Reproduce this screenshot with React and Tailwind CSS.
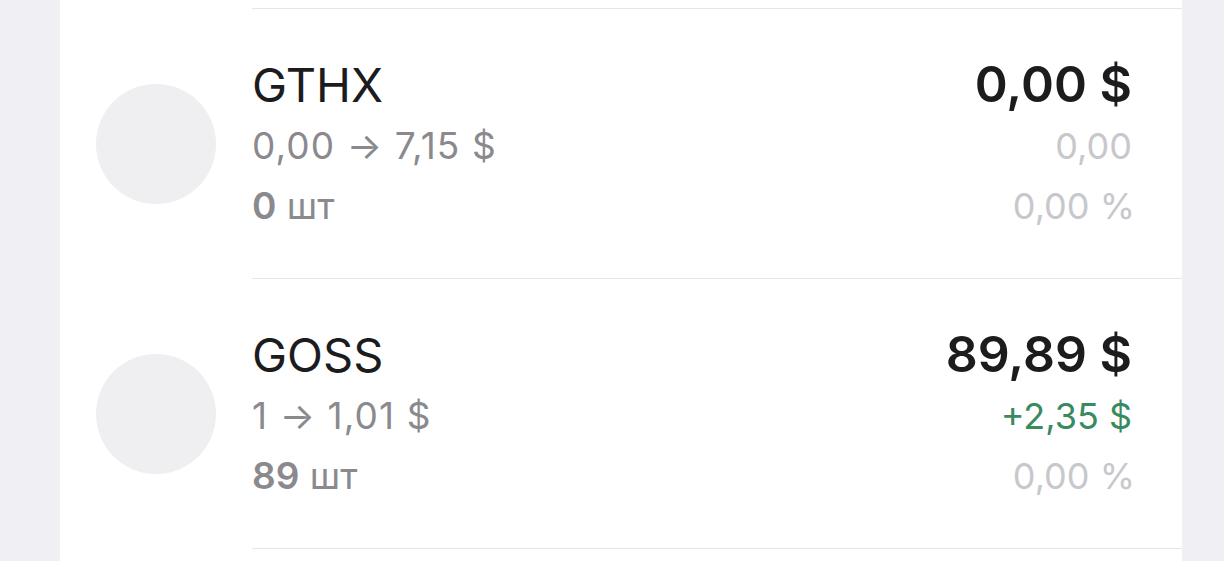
const positions = [
  {
    ticker: 'GTHX',
    prices: '0,00 → 7,15 $',
    qty: '0',
    value: '0,00 $',
    change: '0,00',
    changeColor: 'text-[#c7c7cc]',
    percent: '0,00 %',
  },
  {
    ticker: 'GOSS',
    prices: '1 → 1,01 $',
    qty: '89',
    value: '89,89 $',
    change: '+2,35 $',
    changeColor: 'text-[#3a8a60]',
    percent: '0,00 %',
  },
]

const Row = ({ item }) => (
  <div className="flex h-[270px]">
    <div className="flex w-[192px] shrink-0 items-center pl-[36px]">
      <div className="h-[120px] w-[120px] rounded-full bg-[#efeff1]" />
    </div>
    <div className="flex-1 border-b border-[#e5e5ea] pr-[50px] pt-[44px]">
      <div className="flex items-baseline justify-between leading-[62px]">
        <span className="text-[47px] text-[#1c1c1e]">{item.ticker}</span>
        <span className="text-[50px] font-semibold text-[#1c1c1e]">{item.value}</span>
      </div>
      <div className="flex items-baseline justify-between leading-[60px]">
        <span className="text-[37px] tracking-[0.03em] text-[#8a8a8e]">{item.prices}</span>
        <span className={`text-[36px] ${item.changeColor}`}>{item.change}</span>
      </div>
      <div className="flex items-baseline justify-between leading-[60px]">
        <span className="text-[37px] text-[#8a8a8e]">
          <b className="font-semibold">{item.qty}</b> шт
        </span>
        <span className="-mr-[3px] text-[36px] text-[#c7c7cc]">{item.percent}</span>
      </div>
    </div>
  </div>
)

export default function App() {
  return (
    <div className="h-[561px] overflow-hidden bg-[#efeff4] font-['Inter',sans-serif]">
      <div className="ml-[60px] h-full w-[1122px] bg-white">
        <div className="flex">
          <div className="w-[192px] shrink-0" />
          <div className="h-[9px] flex-1 border-b border-[#e5e5ea]" />
        </div>
        {positions.map(item => (
          <Row key={item.ticker} item={item} />
        ))}
      </div>
    </div>
  )
}
